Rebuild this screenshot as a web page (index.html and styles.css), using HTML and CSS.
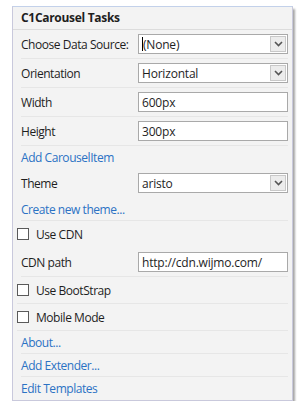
FILE: index.html
```html
<!DOCTYPE html>
<html>
<head>
<meta charset="utf-8">
<link rel="stylesheet" href="styles.css">
</head>
<body>
<div class="panel">
  <div class="header">C1Carousel Tasks</div>
  <div class="row field">
    <span class="label">Choose Data Source:</span>
    <div class="select"><span class="val"><span class="caret"></span>(None)</span><span class="btn"><svg width="9" height="6" viewBox="0 0 9 6"><path d="M1 1 L4.5 4.5 L8 1" fill="none" stroke="#555" stroke-width="1.6"/></svg></span></div>
  </div>
  <div class="row field">
    <span class="label">Orientation</span>
    <div class="select"><span class="val">Horizontal</span><span class="btn"><svg width="9" height="6" viewBox="0 0 9 6"><path d="M1 1 L4.5 4.5 L8 1" fill="none" stroke="#555" stroke-width="1.6"/></svg></span></div>
  </div>
  <div class="row field">
    <span class="label">Width</span>
    <div class="input">600px</div>
  </div>
  <div class="row field">
    <span class="label">Height</span>
    <div class="input">300px</div>
  </div>
  <div class="row link nosep">Add CarouselItem</div>
  <div class="row field nosep">
    <span class="label">Theme</span>
    <div class="select"><span class="val">aristo</span><span class="btn"><svg width="9" height="6" viewBox="0 0 9 6"><path d="M1 1 L4.5 4.5 L8 1" fill="none" stroke="#555" stroke-width="1.6"/></svg></span></div>
  </div>
  <div class="row link">Create new theme...</div>
  <div class="row check nosep"><span class="box"></span>Use CDN</div>
  <div class="row field">
    <span class="label">CDN path</span>
    <div class="input">http://cdn.wijmo.com/</div>
  </div>
  <div class="row check"><span class="box"></span>Use BootStrap</div>
  <div class="row check"><span class="box"></span>Mobile Mode</div>
  <div class="row link">About...</div>
  <div class="row link">Add Extender...</div>
  <div class="row link last">Edit Templates</div>
</div>
</body>
</html>
```
FILE: styles.css
```css
html, body {
  margin: 0;
  padding: 0;
  background: #ffffff;
}
body {
  font-family: "Open Sans", "Noto Sans", sans-serif;
  font-size: 12px;
  color: #1e1e1e;
  padding: 6px 0 0 12px;
}
.panel {
  width: 281px;
  background: #f3f3f3;
  border: 1px solid #c9c9dc;
  border-top-color: #c3d1ea;
  box-shadow: 2px 3px 2px rgba(0,0,0,0.35);
  padding: 0 4px 0 8px;
  box-sizing: border-box;
}
.header {
  height: 22px;
  line-height: 21px;
  font-weight: bold;
  border-bottom: 1px solid #dcdcdc;
  margin: 0 -4px 0 -8px;
  padding-left: 8px;
  letter-spacing: -0.3px;
}
.row {
  display: flex;
  align-items: center;
  border-bottom: 1px solid #e6e6e6;
  box-sizing: border-box;
  letter-spacing: -0.45px;
}
.row.nosep { border-bottom-color: transparent; }
.row.last { border-bottom: none; }
.field { height: 29px; }
.label {
  width: 117px;
  flex: none;
}
.select, .input {
  width: 150px;
  height: 20px;
  box-sizing: border-box;
  border: 1px solid #a9a9a9;
  background: #fff;
  display: flex;
  align-items: center;
  font-size: 12px;
}
.select .val, .input {
  padding-left: 3px;
  letter-spacing: -0.2px;
}
.select .val {
  flex: 1;
  display: flex;
  align-items: center;
}
.caret {
  display: inline-block;
  width: 1px;
  height: 14px;
  background: #000;
}
.btn {
  width: 16px;
  height: 16px;
  margin-right: 1px;
  box-sizing: border-box;
  border: 1px solid #c8c8c8;
  background: #ececec;
  display: flex;
  align-items: center;
  justify-content: center;
}
.link {
  height: 23px;
  color: #2b72c4;
}
.check {
  height: 27px;
  margin-left: -4px;
}
.box {
  width: 12px;
  height: 12px;
  border: 1px solid #5a5a5a;
  background: #fff;
  margin-right: 7px;
  box-sizing: border-box;
}
```
